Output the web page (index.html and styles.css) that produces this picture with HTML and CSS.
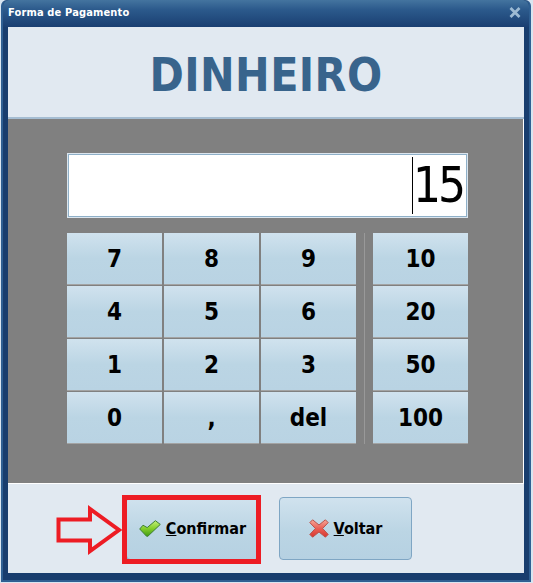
FILE: index.html
```html
<!DOCTYPE html>
<html lang="en">
	<head>
		<title>Forma de Pagamento</title>
		<link rel="stylesheet" href="styles.css">
	</head>
	<body>
		<div class="window">
			<header class="titlebar">
				<span class="title">Forma de Pagamento</span>
				<svg class="close" viewBox="0 0 12 11" width="12" height="11"><path d="M1.5 1 L10.5 10 M10.5 1 L1.5 10" stroke="#9dbad3" stroke-width="2.8" fill="none"/></svg>
			</header>
			<div class="client">
				<div class="heading">DINHEIRO</div>

				<div class="panel">
					<div class="display"><span class="caret"></span><span class="value">15</span></div>

					<div class="keypad">
						<div class="keys">
							<button class="key">7</button>
							<button class="key">8</button>
							<button class="key">9</button>
							<button class="key">4</button>
							<button class="key">5</button>
							<button class="key">6</button>
							<button class="key">1</button>
							<button class="key">2</button>
							<button class="key">3</button>
							<button class="key">0</button>
							<button class="key">,</button>
							<button class="key">del</button>
						</div>
						<div class="divider"></div>
						<div class="keys keys-single">
							<button class="key">10</button>
							<button class="key">20</button>
							<button class="key">50</button>
							<button class="key">100</button>
						</div>
					</div>
				</div>

				<footer class="actions">
					<button class="action">
						<svg viewBox="0 0 22 17" width="22" height="17"><defs><linearGradient id="green" x1="0" y1="0" x2="0" y2="1"><stop offset="0" stop-color="#c4f07a"/><stop offset="0.5" stop-color="#84cf2c"/><stop offset="1" stop-color="#3f9a12"/></linearGradient></defs><path d="M0.7 9 L4 5.2 L8.2 7.6 L16.4 0.7 L21.3 4.4 L8.8 16.3 L7.6 16.3 Z" fill="url(#green)" stroke="#3f7f34" stroke-width="1" stroke-linejoin="round"/></svg>
						<span><u>C</u>onfirmar</span>
					</button>
					<button class="action">
						<svg viewBox="0 0 20 19" width="20" height="19"><defs><linearGradient id="red" x1="0" y1="0" x2="0" y2="1"><stop offset="0" stop-color="#f6a89a"/><stop offset="0.5" stop-color="#ea5f55"/><stop offset="1" stop-color="#d8362f"/></linearGradient></defs><path d="M3.6 0.8 L10 6 L16.4 0.8 L19.2 3.6 L13.6 9.5 L19.2 15.4 L16.4 18.2 L10 13 L3.6 18.2 L0.8 15.4 L6.4 9.5 L0.8 3.6 Z" fill="url(#red)" stroke="#b9534c" stroke-width="1" stroke-linejoin="round"/></svg>
						<span><u>V</u>oltar</span>
					</button>
				</footer>
			</div>
		</div>

		<!-- red annotation drawn over the screenshot -->
		<svg class="arrow" viewBox="0 0 70 52" width="70" height="52"><path d="M3.5 14.5 H35 V4 L64 25 L35 46 V35.5 H3.5 Z" fill="none" stroke="#ed1c24" stroke-width="4"/></svg>
		<div class="highlight"></div>
	</body>
</html>
```

FILE: styles.css
```css
*, *:after, *:before { box-sizing: border-box; }

html, body {
	margin: 0;
	height: 583px;
	overflow: hidden;
	background: #d9e5f0;
}

body {
	position: relative;
	font-family: 'DejaVu Sans Condensed', 'DejaVu Sans', Tahoma, sans-serif;
	font-stretch: condensed;
}

button {
	font-family: inherit;
	font-stretch: inherit;
	color: #000;
	cursor: pointer;
}

/*************************************
Window frame
**************************************/

.window {
	margin-left: 1px;
	width: 530px;
	height: 582px;
	padding: 0 5px 7px;
	display: flex;
	flex-direction: column;
	background: #183d6e;
	border: 2px solid #2f5f92;
	border-top: 0;
	border-radius: 6px 6px 0 0;
}

.titlebar {
	flex: none;
	height: 27px;
	margin: 0 -5px;
	padding: 0 8px 2px 5px;
	display: flex;
	align-items: center;
	justify-content: space-between;
	background: linear-gradient(#44749f, #2c5a8c 35%, #1a3f72);
	border-radius: 6px 6px 0 0;
}

.title {
	color: #fff;
	font-size: 11px;
	font-weight: bold;
	letter-spacing: 0.15px;
}

.client {
	flex: 1;
	display: flex;
	flex-direction: column;
	background: #e1e9f1;
}

.heading {
	flex: none;
	height: 92px;
	padding-top: 5px;
	display: flex;
	align-items: center;
	justify-content: center;
	border-bottom: 2px solid #a5bdd2;
	color: #38648c;
	font-size: 46px;
	font-weight: bold;
	letter-spacing: 0.4px;
}

/*************************************
Keypad panel
**************************************/

.panel {
	flex: none;
	height: 365px;
	padding: 34px 0 0 59px;
	background: #808080;
	border-right: 1px solid #fff;
	border-bottom: 1px solid #fff;
}

.display {
	width: 401px;
	height: 65px;
	display: flex;
	align-items: center;
	justify-content: flex-end;
	padding-right: 4px;
	background: #fff;
	border: 1px solid #dbe5ee;
	outline: 1px solid #8fb0c8;
	outline-offset: -2px;
}

.caret {
	width: 1px;
	height: 57px;
	background: #000;
}

.value {
	font-size: 49px;
	line-height: 1;
	letter-spacing: -3px;
}

.keypad {
	display: flex;
	margin-top: 15px;
}

.keys {
	display: grid;
	grid-template-columns: repeat(3, 95px);
	grid-auto-rows: 52px;
	gap: 1px 2px;
}

.keys-single {
	grid-template-columns: 95px;
}

.divider {
	width: 1px;
	height: 211px;
	margin: 0 8px;
	background: #999;
}

.key {
	padding: 1px 0 0;
	border: 0;
	border-bottom: 1px solid #a3a3a3;
	background: linear-gradient(#d0e2ee, #bbd5e4 50%, #b9d3e3);
	font-size: 24px;
	font-weight: bold;
}

/*************************************
Bottom buttons
**************************************/

.actions {
	flex: 1;
	display: flex;
	gap: 20px;
	padding: 13px 0 0 118px;
}

.action {
	width: 133px;
	height: 63px;
	padding: 0;
	display: flex;
	align-items: center;
	justify-content: center;
	gap: 5px;
	border: 1px solid #7fa6c4;
	border-radius: 4px;
	background: linear-gradient(#d0e2ee, #bbd5e4 55%, #b6d1e2);
	font-size: 16px;
	font-weight: bold;
}

/*************************************
Annotation over the screenshot
**************************************/

.arrow {
	position: absolute;
	left: 55px;
	top: 505px;
}

.highlight {
	position: absolute;
	left: 122px;
	top: 495px;
	width: 139px;
	height: 69px;
	border: 5px solid #ed1c24;
}
```
